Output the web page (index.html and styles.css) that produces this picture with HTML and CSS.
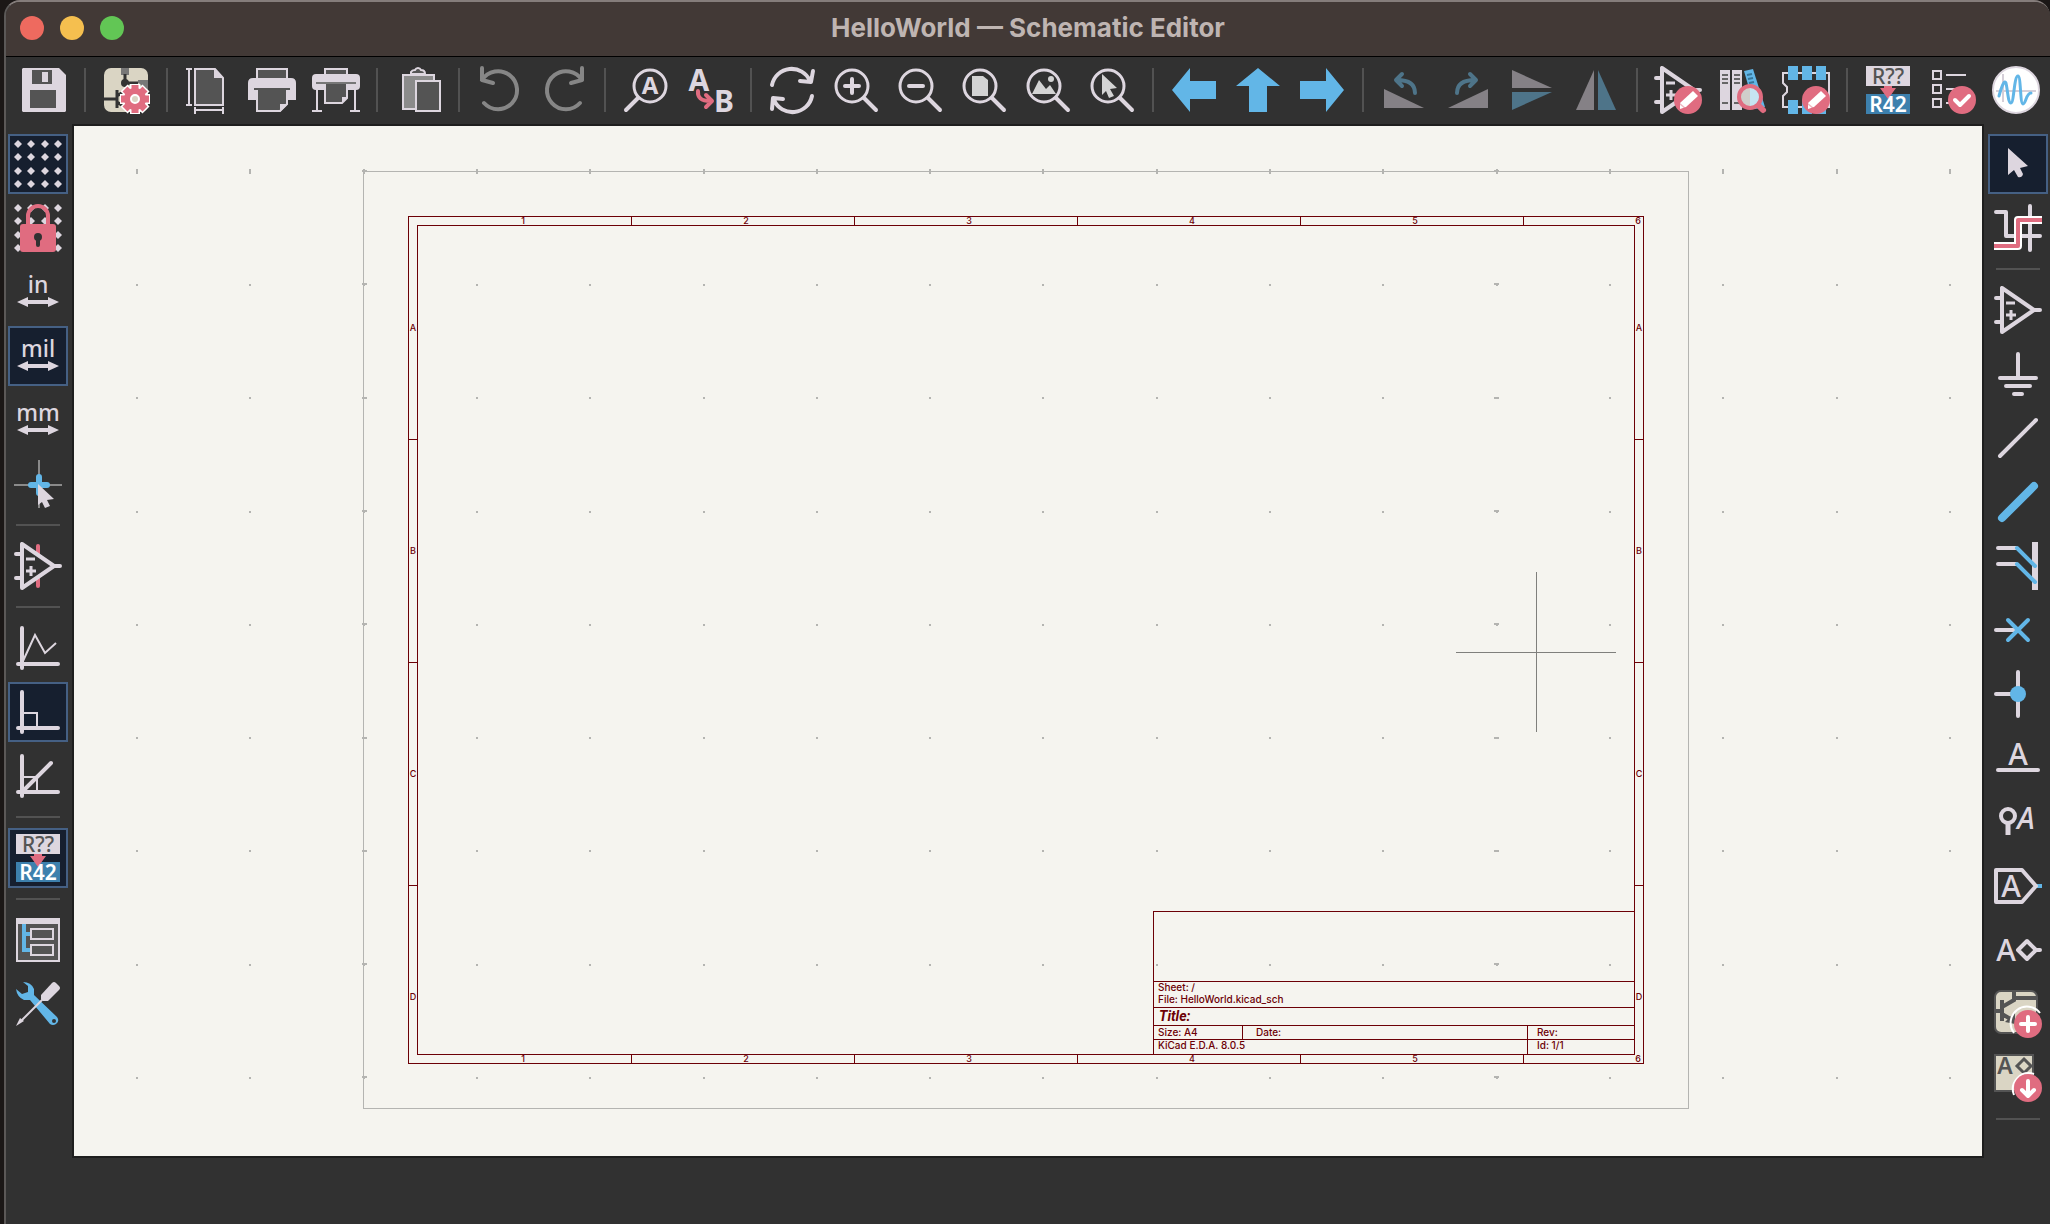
FILE: index.html
```html
<!DOCTYPE html>
<html lang="en">
<head>
<meta charset="utf-8">
<title>HelloWorld — Schematic Editor</title>
<link rel="stylesheet" href="styles.css">
</head>
<body>
<svg class="sprite" aria-hidden="true">
  <symbol id="opamp" viewBox="0 0 48 48"><path class="s4" d="M8 2V46L40 24ZM2 12H8M2 36H8M40 24H46"/><path class="s3b" d="M12 17H21M12 29H22M17 24V34"/></symbol>
  <symbol id="lens" viewBox="0 0 48 48"><circle class="s3" cx="20" cy="20" r="16"/><path class="s4" d="M32 32L44 44"/></symbol>
  <symbol id="dots" viewBox="0 0 48 48"><path class="lt" d="M4 0l4 4-4 4-4-4zM17 0l4 4-4 4-4-4zM31 0l4 4-4 4-4-4zM44 0l4 4-4 4-4-4zM4 13l4 4-4 4-4-4zM17 13l4 4-4 4-4-4zM31 13l4 4-4 4-4-4zM44 13l4 4-4 4-4-4zM4 27l4 4-4 4-4-4zM17 27l4 4-4 4-4-4zM31 27l4 4-4 4-4-4zM44 27l4 4-4 4-4-4zM4 40l4 4-4 4-4-4zM17 40l4 4-4 4-4-4zM31 40l4 4-4 4-4-4zM44 40l4 4-4 4-4-4z"/></symbol>
  <symbol id="span" viewBox="0 0 48 48"><path class="lt" d="M3 34L14 29V32H34V29L45 34L34 39V36H14V39Z"/></symbol>
  <symbol id="edit" viewBox="0 0 48 48"><circle class="pk" cx="34" cy="34" r="14"/><path class="wh" d="M26 43V37L39 25L44 30L32 41Z"/><path class="pk" d="M26 37L32 42L31 43L25 38Z" opacity=".5"/></symbol>
</svg>

<div class="window">
  <header class="titlebar">
    <div class="lights">
      <button class="light close" aria-label="Close"></button>
      <button class="light minimize" aria-label="Minimize"></button>
      <button class="light maximize" aria-label="Zoom"></button>
    </div>
    <h1 class="title">HelloWorld — Schematic Editor</h1>
  </header>

  <nav class="toolbar" aria-label="Main toolbar">
    <button class="tool" aria-label="Save"><svg viewBox="0 0 48 48"><path class="lt" d="M3 2H39L46 9V45L45 46H3L2 45V3Z"/><path class="dk" d="M12 4H32V18H12ZM10 24H36V42H10Z"/><path class="lt" d="M22 6H28V16H22Z"/></svg></button>
    <span class="sep"></span>
    <button class="tool" aria-label="Schematic setup"><svg viewBox="0 0 48 48"><rect class="bg" x="2" y="2" width="44" height="44" rx="7"/><path fill="#777" d="M19 2H27V9H19ZM36 14H46V24H41Q39 17 36 17Z"/><circle fill="#333" cx="23" cy="17" r="4"/><path fill="none" stroke="#333" stroke-width="3" d="M23 8V17H36M2 33H14M15 24V42M15 30L21 26M15 36L21 40"/><path stroke="#fff" stroke-width="10" d="M33 18V48M18 33H48M22 22L44 44M44 22L22 44"/><path stroke="#e06c80" stroke-width="7" d="M33 19V47M19 33H47M23 23L43 43M43 23L23 43"/><circle class="pk" cx="33" cy="33" r="11"/><circle class="bg" stroke="#fff" stroke-width="2" cx="33" cy="33" r="4"/></svg></button>
    <span class="sep"></span>
    <button class="tool" aria-label="Page settings"><svg viewBox="0 0 48 48"><path class="s2" d="M5 3V39M2 3H8M2 39H8M11 44H39M11 41V48M39 41V48"/><path class="s2 dk" d="M11 3H31L39 12V39H11Z"/><path class="lt" d="M30 3V12H39Z"/></svg></button>
    <button class="tool" aria-label="Print"><svg viewBox="0 0 48 48"><path class="s2 dk" d="M9 3H39V14H9Z"/><path class="lt" d="M5 12H43Q48 12 48 17V34H0V17Q0 12 5 12Z"/><path class="s2 dk" d="M9 23H39V38L32 45H9Z"/><path class="lt" d="M32 46V38H40Z"/><path stroke="#545454" stroke-width="2" d="M6 23H42"/></svg></button>
    <button class="tool" aria-label="Plot"><svg viewBox="0 0 48 48"><path class="s2 dk" d="M13 3H35V10H13Z"/><rect class="lt" y="8" width="48" height="16" rx="4"/><path class="s2 dk" d="M13 17H35V32L30 37H13Z"/><path class="lt" d="M30 37V31H36Z"/><path stroke="#777" stroke-width="2" d="M4 17H44"/><path class="s2" d="M5 24V45M43 24V45M0 45H10M38 45H48"/></svg></button>
    <span class="sep"></span>
    <button class="tool" aria-label="Paste"><svg viewBox="0 0 48 48"><path class="s2 mid" d="M9 9H40V43H9Z"/><path class="s2 dk" d="M17 8V6Q18 4 21 4Q22 2 24 2Q26 2 27 4Q31 4 31 8Z"/><path class="s2 dk" d="M22 15H46V45H22Z"/></svg></button>
    <span class="sep"></span>
    <button class="tool" aria-label="Undo" disabled><svg viewBox="0 0 48 48"><path class="s4 off" d="M6 2V14L17 17M6 14A19 19 0 1 1 8 37"/></svg></button>
    <button class="tool" aria-label="Redo" disabled><svg viewBox="0 0 48 48"><path class="s4 off" d="M42 2V14L31 17M42 14A19 19 0 1 0 40 37"/></svg></button>
    <span class="sep"></span>
    <button class="tool" aria-label="Find"><svg viewBox="0 0 48 48"><circle class="s3" cx="28" cy="20" r="16"/><path class="s4" d="M16 32L4 44"/><text class="t24 bold" x="28" y="28">A</text></svg></button>
    <button class="tool" aria-label="Find and replace"><svg viewBox="0 0 48 48"><text class="t30 bold" x="13" y="25">A</text><text class="t30 bold" x="38" y="46">B</text><path class="s4 pks" d="M12 25Q11 35 24 35M20 29L26 35L20 41"/></svg></button>
    <span class="sep"></span>
    <button class="tool" aria-label="Refresh"><svg viewBox="0 0 48 48"><path class="s4" d="M4 19A20 20 0 0 1 42 15M45 5L43 16L32 15M44 30A20 20 0 0 1 6 34M4 43L5 32L15 33"/></svg></button>
    <button class="tool" aria-label="Zoom in"><svg viewBox="0 0 48 48"><use href="#lens"/><path class="s4" d="M13 20H27M20 13V27"/></svg></button>
    <button class="tool" aria-label="Zoom out"><svg viewBox="0 0 48 48"><use href="#lens"/><path class="s4" d="M13 20H27"/></svg></button>
    <button class="tool" aria-label="Zoom to fit"><svg viewBox="0 0 48 48"><use href="#lens"/><path fill="#d3d3d3" d="M12 10H23L28 14V30H12Z"/></svg></button>
    <button class="tool" aria-label="Zoom to objects"><svg viewBox="0 0 48 48"><use href="#lens"/><path fill="#d3d3d3" d="M8 28L15 14L22 23L26 19L32 28Z"/><circle fill="#d3d3d3" cx="27" cy="13" r="3"/></svg></button>
    <button class="tool" aria-label="Zoom to selection"><svg viewBox="0 0 48 48"><use href="#lens"/><path fill="#d3d3d3" d="M14 8L29 22L22 23L26 30L21 32L18 25L14 29Z"/></svg></button>
    <span class="sep"></span>
    <button class="tool" aria-label="Navigate back"><svg viewBox="0 0 48 48"><path class="bl" d="M2 24L20 2V15H46V33H20V46Z"/></svg></button>
    <button class="tool" aria-label="Navigate up"><svg viewBox="0 0 48 48"><path class="bl" d="M24 2L46 20H33V46H15V20H2Z"/></svg></button>
    <button class="tool" aria-label="Navigate forward"><svg viewBox="0 0 48 48"><path class="bl" d="M46 24L28 2V15H2V33H28V46Z"/></svg></button>
    <span class="sep"></span>
    <button class="tool" aria-label="Rotate counterclockwise" disabled><svg viewBox="0 0 48 48"><path fill="#858186" d="M4 23V42H44Z"/><path class="s4 offb" d="M35 27Q35 14 17 14M22 8L16 14L22 20"/></svg></button>
    <button class="tool" aria-label="Rotate clockwise" disabled><svg viewBox="0 0 48 48"><path fill="#858186" d="M44 23V42H4Z"/><path class="s4 offb" d="M13 27Q13 14 31 14M26 8L32 14L26 20"/></svg></button>
    <button class="tool" aria-label="Mirror vertically" disabled><svg viewBox="0 0 48 48"><path fill="#858186" d="M4 4L44 22H4Z"/><path fill="#4e7489" d="M4 26H44L4 44Z"/></svg></button>
    <button class="tool" aria-label="Mirror horizontally" disabled><svg viewBox="0 0 48 48"><path fill="#858186" d="M22 4V44H4Z"/><path fill="#4e7489" d="M26 4V44H44Z"/></svg></button>
    <span class="sep"></span>
    <button class="tool" aria-label="Symbol editor"><svg viewBox="0 0 48 48"><use href="#opamp"/><use href="#edit"/></svg></button>
    <button class="tool" aria-label="Symbol library browser"><svg viewBox="0 0 48 48"><path class="lt" d="M2 4H12V44H2ZM14 4H24V44H14Z"/><path stroke="#666" stroke-width="2" d="M4 9H10M4 13H10M4 17H10M4 37H10M16 9H22M16 13H22M16 17H22M16 37H22"/><path class="bl" d="M26 5L35 3L47 41L37 43Z"/><path stroke="#37769a" stroke-width="2" d="M29 9L34 8M30 13L35 12M31 17L36 16"/><path class="s4 pks" stroke-width="6" d="M40 39L45 44"/><circle fill="#c6e4f2" cx="32" cy="31" r="11"/><path fill="#d0cfcb" d="M32 20A11 11 0 0 0 32 42Z"/><circle class="s4 pks" cx="32" cy="31" r="11"/></svg></button>
    <button class="tool" aria-label="Footprint editor"><svg viewBox="0 0 48 48"><path class="s2" d="M1 7H47V41H1V30L5 26V21L1 17Z"/><path class="bl" d="M6 0H16V14H6ZM20 0H30V14H20ZM34 0H44V14H34ZM6 34H16V48H6ZM20 34H30V48H20ZM34 34H44V48H34Z"/><use href="#edit"/></svg></button>
    <span class="sep"></span>
    <button class="tool" aria-label="Annotate schematic"><svg viewBox="0 0 48 48"><path class="lt" d="M2 0H46V20H2Z"/><path fill="#3d80ad" d="M2 28H46V48H2Z"/><text class="t21 dkt" x="24" y="18">R??</text><path class="pk" d="M20 20H28V22H32L24 33L16 22H20Z"/><text class="t21 wh semi" x="24" y="46">R42</text></svg></button>
    <button class="tool" aria-label="Electrical rules checker"><svg viewBox="0 0 48 48"><path class="s2" d="M5 5H13V13H5ZM5 19H13V27H5ZM5 33H13V41H5ZM18 9H38M18 23H30M18 37H30"/><circle class="pk" cx="34" cy="34" r="14"/><path class="s4 whs" d="M27 34L32 39L41 30"/></svg></button>
    <button class="tool" aria-label="Simulator"><svg viewBox="0 0 48 48"><circle class="wh" stroke="#ddd6df" stroke-width="2" cx="24" cy="24" r="23"/><path stroke="#d5cfd8" stroke-width="2" d="M11 8V36M4 25H44"/><path class="s4 bls" stroke-width="3" d="M7 30Q12 12 14 17C16 26 16 37 19 37C22 37 22 10 26 10C29 10 28 38 31 38C34 38 34 27 39 27"/></svg></button>
  </nav>

  <main class="workspace">
    <nav class="sidebar left" aria-label="Display options">
      <button class="toggle on" aria-label="Show grid" aria-pressed="true"><svg viewBox="0 0 48 48"><use href="#dots"/></svg></button>
      <button class="toggle" aria-label="Grid overrides"><svg viewBox="0 0 48 48"><use href="#dots"/><path class="s4 pks" d="M14 22V12A10 10 0 0 1 34 12V22"/><rect class="pk" x="6" y="20" width="36" height="28" rx="3"/><circle fill="#313131" cx="24" cy="33" r="4"/><path stroke="#313131" stroke-width="4" stroke-linecap="round" d="M24 33V41"/></svg></button>
      <button class="toggle" aria-label="Inches"><svg viewBox="0 0 48 48"><text class="t23" x="24" y="25">in</text><use href="#span"/></svg></button>
      <button class="toggle on" aria-label="Mils" aria-pressed="true"><svg viewBox="0 0 48 48"><text class="t23" x="24" y="25">mil</text><use href="#span"/></svg></button>
      <button class="toggle" aria-label="Millimeters"><svg viewBox="0 0 48 48"><text class="t23" x="24" y="25">mm</text><use href="#span"/></svg></button>
      <button class="toggle" aria-label="Full-window crosshairs"><svg viewBox="0 0 48 48"><path stroke="#8a8a8a" stroke-width="2" d="M25 0V48M0 25H48"/><path class="s4 bls" stroke-width="6" d="M25 17V33M17 25H33"/><path class="lt" d="M24 24L40 39L33 40L36 46L31 48L28 42L24 45Z"/></svg></button>
      <span class="rule"></span>
      <button class="toggle" aria-label="Show hidden pins"><svg viewBox="0 0 48 48"><path class="s4 pks" d="M24 4V44"/><path fill="#313131" d="M8 2V46L40 24Z"/><use href="#opamp"/></svg></button>
      <span class="rule"></span>
      <button class="toggle" aria-label="Free angle lines"><svg viewBox="0 0 48 48"><path class="s4" d="M8 4V44M4 40H44"/><path class="s2" d="M9 37L21 11L31 29L42 19"/></svg></button>
      <button class="toggle on" aria-label="90 degree lines" aria-pressed="true"><svg viewBox="0 0 48 48"><path class="s4" d="M8 4V44M4 40H44"/><path class="s2" d="M9 25H23V39"/></svg></button>
      <button class="toggle" aria-label="45 degree lines"><svg viewBox="0 0 48 48"><path class="s4" d="M8 4V44M4 40H44M9 39L37 11"/><path class="s2" d="M9 25H23V39"/></svg></button>
      <span class="rule"></span>
      <button class="toggle on" aria-label="Automatic annotation" aria-pressed="true"><svg viewBox="0 0 48 48"><path class="lt" d="M2 0H46V20H2Z"/><path fill="#3d80ad" d="M2 28H46V48H2Z"/><text class="t21 dkt" x="24" y="18">R??</text><path class="pk" d="M20 20H28V22H32L24 33L16 22H20Z"/><text class="t21 wh semi" x="24" y="46">R42</text></svg></button>
      <span class="rule"></span>
      <button class="toggle" aria-label="Hierarchy navigator"><svg viewBox="0 0 48 48"><path class="s2 dk" d="M3 3H45V45H3Z"/><path class="lt" d="M2 2H46V8H2Z"/><path fill="none" stroke="#62b6e7" stroke-width="4" d="M10 8V34H16M10 18H16"/><path class="s2" d="M17 13H39V23H17ZM17 29H39V39H17Z"/></svg></button>
      <button class="toggle" aria-label="Properties manager"><svg viewBox="0 0 48 48"><path class="bl" d="M9 2Q17 2 20 9V15L43 37Q46 41 42 44Q39 46 36 44L16 20H10Q3 17 2 9L8 14L14 12L14 6Z"/><circle fill="#313131" cx="40" cy="41" r="2"/><path class="s2" d="M30 18L7 41"/><path class="lt" d="M2 46L6 38L10 41Z"/><path class="lt" d="M27 15L38 3Q40 1 42 3L45 6Q47 8 45 10L34 21H29L27 19Z"/></svg></button>
    </nav>

    <section class="canvas" aria-label="Schematic sheet">
      <svg class="sheet" viewBox="74 126 1908 1030">
        <g class="grid">
          <path stroke-width="5" d="M136 171.5H1982"/>
          <path stroke-width="2" d="M136 285H1982M136 398H1982M136 512H1982M136 625H1982M136 738H1982M136 851H1982M136 965H1982M136 1078H1982"/>
          <path stroke-width="5" d="M364.5 170V1100M1496.5 170V1100"/>
        </g>
        <path class="page" d="M363.5 171.5H1688.5V1108.5H363.5Z"/>
        <path class="frame" d="M408.5 216.5H1643.5V1063.5H408.5ZM417.5 225.5H1634.5V1054.5H417.5ZM631.5 216V225M854.5 216V225M1077.5 216V225M1300.5 216V225M1523.5 216V225M631.5 1055V1063M854.5 1055V1063M1077.5 1055V1063M1300.5 1055V1063M1523.5 1055V1063M409 439.5H417M409 662.5H417M409 885.5H417M1635 439.5H1643M1635 662.5H1643M1635 885.5H1643"/>
        <path class="frame" d="M1153.5 1054V911.5H1634M1153.5 981.5H1634M1153.5 1007.5H1634M1153.5 1025.5H1634M1153.5 1039.5H1634M1242.5 1025V1039M1527.5 1025V1054"/>
        <g class="zone">
          <text x="523" y="224">1</text><text x="746" y="224">2</text><text x="969" y="224">3</text><text x="1192" y="224">4</text><text x="1415" y="224">5</text><text x="1638" y="224">6</text>
          <text x="523" y="1062">1</text><text x="746" y="1062">2</text><text x="969" y="1062">3</text><text x="1192" y="1062">4</text><text x="1415" y="1062">5</text><text x="1638" y="1062">6</text>
          <text x="413" y="331">A</text><text x="413" y="554">B</text><text x="413" y="777">C</text><text x="413" y="1000">D</text>
          <text x="1639" y="331">A</text><text x="1639" y="554">B</text><text x="1639" y="777">C</text><text x="1639" y="1000">D</text>
        </g>
        <g class="block">
          <text x="1158" y="991">Sheet: /</text>
          <text x="1158" y="1003">File: HelloWorld.kicad_sch</text>
          <text class="name" x="1159" y="1021">Title:</text>
          <text x="1158" y="1036">Size: A4</text>
          <text x="1256" y="1036">Date:</text>
          <text x="1537" y="1036">Rev:</text>
          <text x="1158" y="1049">KiCad E.D.A. 8.0.5</text>
          <text x="1537" y="1049">Id: 1/1</text>
        </g>
        <path class="cross" d="M1456 652.5H1616M1536.5 572V732"/>
      </svg>
    </section>

    <nav class="sidebar right" aria-label="Drawing tools">
      <button class="toggle on" aria-label="Select" aria-pressed="true"><svg viewBox="0 0 48 48"><path class="lt" d="M14 8L34 26L26 28L29 34Q28 38 24 37L20 30L14 35Z"/></svg></button>
      <button class="toggle" aria-label="Highlight net"><svg viewBox="0 0 48 48"><path class="s4" d="M2 8H12V32H46M36 2V46"/><path fill="none" stroke="#fff" stroke-width="8" stroke-linejoin="round" d="M0 42H24V16H48"/><path fill="none" stroke="#e06c80" stroke-width="4" stroke-linejoin="round" d="M0 42H24V16H48"/></svg></button>
      <span class="rule"></span>
      <button class="toggle" aria-label="Add symbol"><svg viewBox="0 0 48 48"><use href="#opamp"/></svg></button>
      <button class="toggle" aria-label="Add power"><svg viewBox="0 0 48 48"><path class="s4" d="M24 4V28M6 28H42M12 36H36M20 44H28"/></svg></button>
      <button class="toggle" aria-label="Add wire"><svg viewBox="0 0 48 48"><path class="s4" d="M6 42L42 6"/></svg></button>
      <button class="toggle" aria-label="Add bus"><svg viewBox="0 0 48 48"><path class="s4 bls" stroke-width="8" d="M8 40L40 8"/></svg></button>
      <button class="toggle" aria-label="Add bus entry"><svg viewBox="0 0 48 48"><path class="lt" d="M38 0H44V48H38Z"/><path class="s4" d="M4 6H22M4 22H22"/><path class="s4 bls" d="M23 6L41 24M23 22L41 40"/></svg></button>
      <button class="toggle" aria-label="Add no-connect"><svg viewBox="0 0 48 48"><path class="s4" d="M2 24H20"/><path class="s4 bls" d="M14 14L34 34M34 14L14 34"/></svg></button>
      <button class="toggle" aria-label="Add junction"><svg viewBox="0 0 48 48"><path class="s4" d="M2 24H24M24 2V46"/><circle class="bl" cx="24" cy="24" r="8"/></svg></button>
      <button class="toggle" aria-label="Add label"><svg viewBox="0 0 48 48"><text class="t30" x="24" y="31">A</text><path class="s4" d="M4 36H44"/></svg></button>
      <button class="toggle" aria-label="Add net class directive"><svg viewBox="0 0 48 48"><circle class="s4" cx="14" cy="18" r="7"/><path stroke="#ddd6df" stroke-width="5" d="M14 25V37"/><text class="t30 ital" x="32" y="31">A</text></svg></button>
      <button class="toggle" aria-label="Add global label"><svg viewBox="0 0 48 48"><path stroke="#62b6e7" stroke-width="4" d="M42 24H48"/><path class="s4" d="M2 8H28L42 24L28 40H2Z"/><text class="t30" x="17" y="35">A</text></svg></button>
      <button class="toggle" aria-label="Add hierarchical label"><svg viewBox="0 0 48 48"><text class="t30" x="12" y="35">A</text><path class="s4" stroke-linejoin="miter" d="M33 15L42 24L33 33L24 24ZM42 24H46"/></svg></button>
      <button class="toggle" aria-label="Add sheet"><svg viewBox="0 0 48 48"><rect class="bg" stroke="#545454" stroke-width="2" x="1" y="1" width="42" height="42" rx="6"/><path fill="none" stroke="#545454" stroke-width="4" d="M8 10V31M1 21H8M8 17L20 10V1M20 8H43M8 24L20 31"/><path class="dk" d="M21 22V34L11 32Z"/><path class="s2 whs" d="M20 43A16 16 0 0 1 46 23"/><circle class="pk" cx="34" cy="34" r="14"/><path class="s4 whs" d="M27 34H41M34 27V41"/></svg></button>
      <button class="toggle" aria-label="Import sheet pin"><svg viewBox="0 0 48 48"><path class="bg" stroke="#545454" stroke-width="2" d="M1 1H39V37H1Z"/><text class="t23 dkt semi" x="11" y="20">A</text><path fill="none" stroke="#545454" stroke-width="3" d="M30 5L37 12L30 19L23 12Z"/><path class="s2 whs" d="M20 41A16 16 0 0 1 40 20"/><circle class="pk" cx="34" cy="34" r="14"/><path class="s4 whs" d="M34 27V41M28 36L34 42L40 36"/></svg></button>
      <span class="rule"></span>
    </nav>
  </main>
  <footer class="statusbar"></footer>
</div>
</body>
</html>
```
FILE: styles.css
```css
* { box-sizing: border-box; }

body {
  margin: 0;
  background: #1b1716;
  font-family: "Inter", "Liberation Sans", sans-serif;
}

.sprite { position: absolute; width: 0; height: 0; }

.window {
  display: flex;
  flex-direction: column;
  min-height: 100vh;
  margin-left: 4px;
  border-top: 2px solid #857d7b;
  border-left: 2px solid #5b5857;
  border-radius: 16px 16px 0 0;
  background: #313131;
  overflow: hidden;
}

.titlebar {
  display: grid;
  grid-template-columns: 1fr auto 1fr;
  align-items: center;
  height: 55px;
  padding-bottom: 2px;
  border-bottom: 1px solid #000;
  background: #423936;
}

.lights { display: flex; gap: 16px; padding-left: 14px; }

.light {
  width: 24px;
  height: 24px;
  padding: 0;
  border: 0;
  border-radius: 50%;
}
.close { background: #ee6a5f; }
.minimize { background: #f5bf4f; }
.maximize { background: #62c655; }

.title {
  margin: 0;
  color: #bfb5b2;
  font-size: 26px;
  line-height: 30px;
  font-weight: 700;
}

.toolbar {
  display: flex;
  align-items: center;
  height: 67px;
  padding: 0 2px 1px 6px;
}

.tool, .toggle {
  display: grid;
  place-items: center;
  flex: none;
  padding: 0;
  border: 0;
  background: none;
}
.tool { width: 64px; height: 66px; }
.tool svg, .toggle svg { width: 48px; height: 48px; overflow: visible; }

.sep {
  flex: none;
  width: 2px;
  height: 44px;
  margin: 0 8px;
  background: #525252;
}

.workspace { display: flex; flex: 1; min-height: 0; }

.sidebar {
  display: flex;
  flex-direction: column;
  flex: none;
  width: 66px;
  padding-top: 8px;
}
.left { padding-left: 2px; }
.right { padding-left: 4px; }

.toggle {
  width: 60px;
  height: 60px;
  margin: 2px 0;
  border: 2px solid transparent;
}
.toggle.on { border-color: #456084; background: #161f2f; }

.rule {
  width: 44px;
  height: 2px;
  margin: 8px;
  background: #525252;
}

.canvas {
  flex: 1;
  min-width: 0;
  border: 2px solid #1e1e1e;
  background: #f5f4ef;
}
.sheet { display: block; width: 100%; height: 100%; }

.statusbar { height: 66px; }

/* icon paint */
.lt { fill: #ddd6df; }
.pk { fill: #e06c80; }
.bl { fill: #62b6e7; }
.wh { fill: #fff; }
.bg { fill: #dad5c4; }
.s2, .s3, .s3b, .s4 {
  fill: none;
  stroke: #ddd6df;
  stroke-linejoin: round;
}
.s2 { stroke-width: 2px; stroke-linejoin: miter; }
.s3, .s3b { stroke-width: 3px; }
.s4 { stroke-linecap: round; }
.s4:not([stroke-width]) { stroke-width: 4px; }
.dk { fill: #545454; }
.mid { fill: #8b8b8b; }
.pks { stroke: #e06c80; }
.bls { stroke: #62b6e7; }
.whs { stroke: #fff; }
.off { stroke: #868686; }
.offb { stroke: #4e7489; }

.t21, .t23, .t24, .t30 {
  fill: #ddd6df;
  font-family: "Noto Sans", "Open Sans", sans-serif;
  font-weight: 500;
  text-anchor: middle;
}
.t21 { font-size: 21px; }
.t23 { font-size: 23px; }
.t24 { font-size: 24px; }
.t30 { font-size: 30px; }
.bold { font-weight: 700; }
.semi { font-weight: 600; }
.ital { font-style: italic; }
.dkt { fill: #545454; }
.t21.wh { fill: #fff; }

/* drawing sheet */
.grid path {
  fill: none;
  stroke: #b4b4b1;
  stroke-dasharray: 2 111.3;
  shape-rendering: crispEdges;
}
.page, .frame, .cross {
  fill: none;
  stroke-width: 1px;
  shape-rendering: crispEdges;
}
.page { stroke: #b4b4b1; }
.frame { stroke: #6c0006; }
.cross { stroke: #7f7f7c; }
.zone text, .block text {
  fill: #6c0006;
  font-family: "Inter", "Liberation Sans", sans-serif;
  font-weight: 500;
}
.zone text { font-size: 9px; text-anchor: middle; }
.block text { font-size: 10px; }
.block .name {
  font-family: "Roboto", "Liberation Sans", sans-serif;
  font-size: 14px;
  font-weight: 700;
  font-style: italic;
}
```
